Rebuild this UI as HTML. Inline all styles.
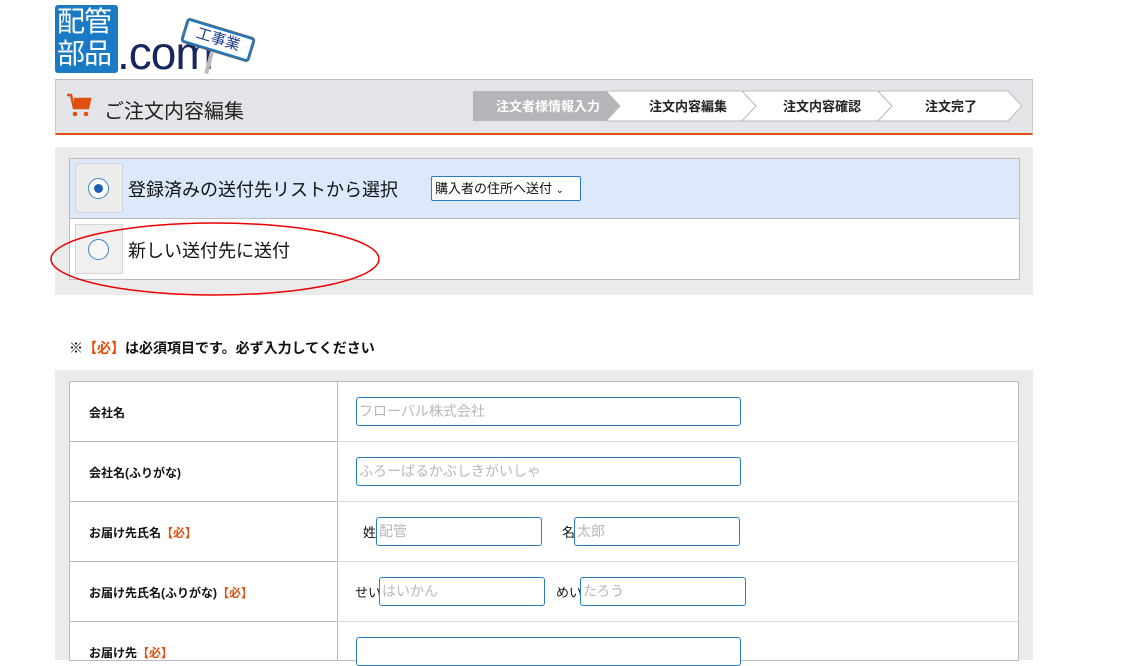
<!DOCTYPE html>
<html><head><meta charset="utf-8"><style>
*{margin:0;padding:0;box-sizing:border-box}
body{width:1121px;height:647px;overflow:hidden;background:#fff;font-family:"Liberation Sans","Noto Sans CJK JP",sans-serif;position:relative;color:#111}
.a{position:absolute}
.inp{position:absolute;border:1px solid #2a7ac4;border-radius:3px;height:29px;background:#fff;color:#b8b8b8;font-size:14px;line-height:27px;padding-left:2px;white-space:nowrap;overflow:hidden}
.lbl{position:absolute;left:89px;font-size:12px;font-weight:bold;color:#111}
.req{color:#e0500f}
.hl{position:absolute;left:70px;width:948px;height:1px;background:#d8d8d8}
</style></head><body>
<!-- logo -->
<div class="a" style="left:55px;top:5px;width:63px;height:68px;background:#1a7ac4;border-radius:3px;color:#fff;font-size:28px;line-height:32px;letter-spacing:-1px;padding:1px 0 0 2px">配管<br>部品</div>
<div class="a" style="left:117px;top:30px;font-size:46px;line-height:46px;color:#18265e;letter-spacing:-1px">.com</div>
<div class="a" style="left:207px;top:52px;width:4px;height:22px;background:#bbb;transform:rotate(15deg)"></div>
<div class="a" style="left:183px;top:28px;width:70px;height:24px;border:2px solid #1a7ac4;border-radius:3px;background:#fff;transform:rotate(17deg);font-size:15px;color:#1a3a8a;text-align:center;line-height:20px;box-shadow:0 0 0 1px #666">工事業</div>
<!-- header -->
<div class="a" style="left:55px;top:79px;width:978px;height:56px;background:#e4e5e8;border-top:1px solid #bcbcbc;border-left:1px solid #ccc;border-right:1px solid #ccc;border-bottom:2px solid #e05010"></div>
<svg class="a" style="left:66px;top:93px" width="26" height="26" viewBox="0 0 26 26"><path d="M1 2h4l3 13h14l2-9H8" fill="none" stroke="#e05010" stroke-width="2.5"/><rect x="8" y="7" width="15" height="8" fill="#e05010"/><circle cx="9" cy="21" r="2.3" fill="#e05010"/><circle cx="20" cy="21" r="2.3" fill="#e05010"/></svg>
<div class="a" style="left:104px;top:95px;font-size:20px;color:#222">ご注文内容編集</div>
<svg class="a" style="left:472px;top:90px" width="552" height="32">
<polygon points="1,1 134,1 148,16 134,31 1,31" fill="#b4b5b8"/>
<polygon points="134,1 270,1 284,16 270,31 134,31 148,16" fill="#fff" stroke="#bbb"/>
<polygon points="270,1 406,1 420,16 406,31 270,31 284,16" fill="#fff" stroke="#bbb"/>
<polygon points="406,1 536,1 550,16 536,31 406,31 420,16" fill="#fff" stroke="#bbb"/>
<g font-size="13" font-weight="bold" font-family="Liberation Sans,Noto Sans CJK JP,sans-serif" text-anchor="middle">
<text x="76" y="21" fill="#fff">注文者様情報入力</text>
<text x="216" y="21" fill="#222">注文内容編集</text>
<text x="350" y="21" fill="#222">注文内容確認</text>
<text x="479" y="21" fill="#222">注文完了</text></g></svg>
<!-- address choice -->
<div class="a" style="left:55px;top:147px;width:978px;height:148px;background:#ebebeb;border-radius:2px"></div>
<div class="a" style="left:69px;top:158px;width:951px;height:122px;border:1px solid #bbb;background:#fff"></div>
<div class="a" style="left:70px;top:159px;width:949px;height:60px;background:#dbe9fb;border-bottom:1px solid #bbb"></div>
<div class="a" style="left:75px;top:163px;width:48px;height:50px;background:#ececec;border:1px solid #d6d6d6"></div>
<div class="a" style="left:75px;top:224px;width:48px;height:50px;background:#f0f0f0;border:1px solid #d6d6d6"></div>
<div class="a" style="left:88px;top:178px;width:21px;height:21px;border-radius:50%;border:1px solid #3a86cc;background:#fff"></div>
<div class="a" style="left:94px;top:184px;width:9px;height:9px;border-radius:50%;background:#1f5fb3"></div>
<div class="a" style="left:88px;top:239px;width:21px;height:21px;border-radius:50%;border:1px solid #3a86cc;background:#f8f8f8"></div>
<div class="a" style="left:128px;top:176px;font-size:18px;color:#111">登録済みの送付先リストから選択</div>
<div class="a" style="left:128px;top:237px;font-size:18px;color:#111">新しい送付先に送付</div>
<div class="a" style="left:431px;top:176px;width:150px;height:25px;border:1px solid #2a7ac4;border-radius:2px;background:#fff;font-size:13px;line-height:23px;padding-left:3px">購入者の住所へ送付 <span style="font-size:10px">&#8964;</span></div>
<svg class="a" style="left:48px;top:218px" width="340" height="80"><ellipse cx="167" cy="41" rx="164" ry="36" fill="none" stroke="#e00" stroke-width="1.5"/></svg>
<!-- note -->
<div class="a" style="left:69px;top:338px;font-size:14px;font-weight:bold"><span style="font-weight:normal">※</span><span class="req">【必】</span>は必須項目です。必ず入力してください</div>
<!-- form -->
<div class="a" style="left:55px;top:370px;width:978px;height:290px;background:#ebebeb"></div>
<div class="a" style="left:69px;top:381px;width:950px;height:280px;background:#fff;border:1px solid #bbb"></div>
<div class="a" style="left:337px;top:381px;width:1px;height:280px;background:#bbb"></div>
<div class="hl" style="top:441px"></div><div class="hl" style="top:501px"></div><div class="hl" style="top:561px"></div><div class="hl" style="top:621px"></div>
<div class="a" style="left:70px;top:441px;width:267px;height:1px;background:#bbb"></div>
<div class="a" style="left:70px;top:501px;width:267px;height:1px;background:#bbb"></div>
<div class="a" style="left:70px;top:561px;width:267px;height:1px;background:#bbb"></div>
<div class="a" style="left:70px;top:621px;width:267px;height:1px;background:#bbb"></div>
<div class="lbl" style="top:404px">会社名</div>
<div class="lbl" style="top:464px">会社名(ふりがな)</div>
<div class="lbl" style="top:524px">お届け先氏名<span class="req">【必】</span></div>
<div class="lbl" style="top:584px">お届け先氏名(ふりがな)<span class="req">【必】</span></div>
<div class="lbl" style="top:644px">お届け先<span class="req">【必】</span></div>
<div class="inp" style="left:356px;top:397px;width:385px">フローバル株式会社</div>
<div class="inp" style="left:356px;top:457px;width:385px">ふろーばるかぶしきがいしゃ</div>
<div class="a" style="left:363px;top:522px;font-size:13px">姓</div>
<div class="inp" style="left:376px;top:517px;width:166px">配管</div>
<div class="a" style="left:562px;top:522px;font-size:13px">名</div>
<div class="inp" style="left:574px;top:517px;width:166px">太郎</div>
<div class="a" style="left:355px;top:582px;font-size:13px">せい</div>
<div class="inp" style="left:379px;top:577px;width:166px">はいかん</div>
<div class="a" style="left:556px;top:582px;font-size:13px">めい</div>
<div class="inp" style="left:580px;top:577px;width:166px">たろう</div>
<div class="inp" style="left:356px;top:637px;width:385px"></div>
</body></html>
